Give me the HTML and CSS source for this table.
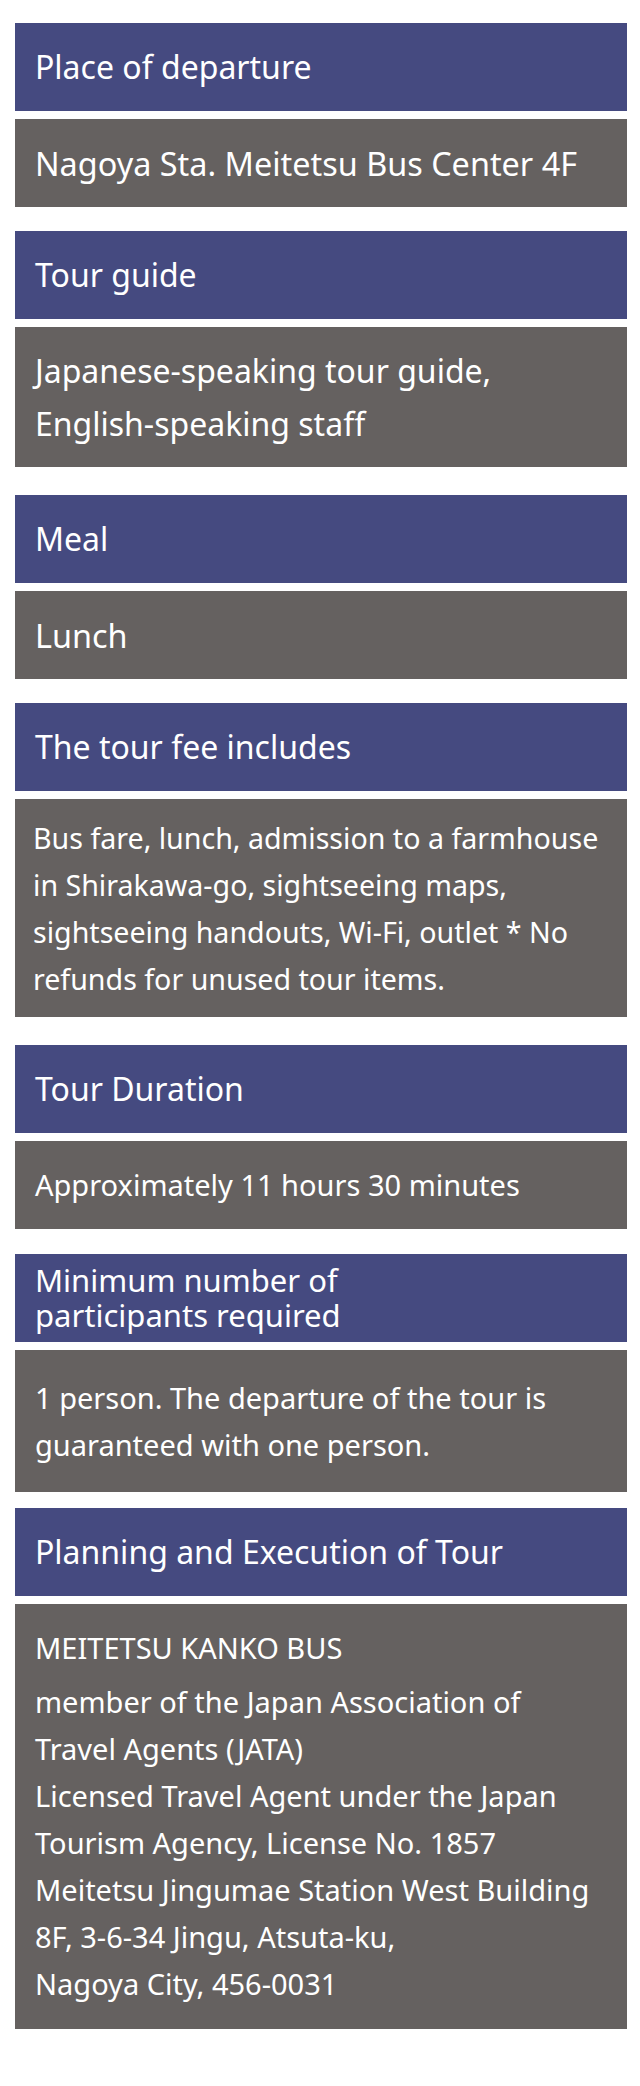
FILE: index.html
```html
<!DOCTYPE html>
<html lang="en">
<head>
<meta charset="utf-8">
<title>Tour details</title>
<link rel="stylesheet" href="styles.css">
</head>
<body>
<main class="info">
  <section class="item">
    <h2 class="label">Place of departure</h2>
    <div class="value">Nagoya Sta. Meitetsu Bus Center 4F</div>
  </section>
  <section class="item">
    <h2 class="label">Tour guide</h2>
    <div class="value value-two">Japanese-speaking tour guide,<br>English-speaking staff</div>
  </section>
  <section class="item item-wide">
    <h2 class="label">Meal</h2>
    <div class="value">Lunch</div>
  </section>
  <section class="item">
    <h2 class="label">The tour fee includes</h2>
    <div class="value value-small value-fee">Bus fare, lunch, admission to a farmhouse in Shirakawa-go, sightseeing maps, sightseeing handouts, Wi-Fi, outlet * No refunds for unused tour items.</div>
  </section>
  <section class="item item-wide">
    <h2 class="label">Tour Duration</h2>
    <div class="value value-mid">Approximately 11 hours 30 minutes</div>
  </section>
  <section class="item item-mid">
    <h2 class="label label-tight">Minimum number of<br>participants required</h2>
    <div class="value value-small value-min">1 person. The departure of the tour is guaranteed with one person.</div>
  </section>
  <section class="item item-narrow">
    <h2 class="label">Planning and Execution of Tour</h2>
    <div class="value value-small value-company">
      <p class="company">MEITETSU KANKO BUS</p>
      <p class="details">member of the Japan Association of<br>Travel Agents (JATA)<br>Licensed Travel Agent under the Japan<br>Tourism Agency, License No. 1857<br>Meitetsu Jingumae Station West Building<br>8F, 3-6-34 Jingu, Atsuta-ku,<br>Nagoya City, 456-0031</p>
    </div>
  </section>
</main>
</body>
</html>
```

FILE: styles.css
```css
html, body {
  margin: 0;
  padding: 0;
  background: #ffffff;
}

body {
  font-family: "Noto Sans", "Liberation Sans", sans-serif;
  color: #ffffff;
}

.info {
  display: flex;
  flex-direction: column;
  padding: 23px 13px 58px 15px;
}

.item {
  display: flex;
  flex-direction: column;
  gap: 8px;
  margin-top: 24px;
}

.item:first-child {
  margin-top: 0;
}

.item-wide {
  margin-top: 28px;
}

.item-mid {
  margin-top: 25px;
}

.item-narrow {
  margin-top: 16px;
}

.label {
  margin: 0;
  min-height: 88px;
  box-sizing: border-box;
  display: flex;
  align-items: center;
  padding: 0 20px;
  background: #454a80;
  font-size: 32px;
  font-weight: 400;
  line-height: 40px;
}

.label-tight {
  font-size: 31px;
  line-height: 35px;
}

.value {
  min-height: 88px;
  box-sizing: border-box;
  display: flex;
  flex-direction: column;
  justify-content: center;
  padding: 0 20px;
  background: #656160;
  font-size: 32.4px;
  font-weight: 400;
  line-height: 54px;
}

.value-two {
  padding: 17px 20px;
  font-size: 32px;
  line-height: 53px;
}

.value-small {
  font-size: 29px;
  line-height: 47px;
}

.value-mid {
  font-size: 29px;
}

.value-fee {
  padding: 15px 18px;
  font-size: 28.6px;
}

.value-min {
  padding: 24px 20px;
}

.value-company {
  padding: 20px 20px 22px;
}

.company,
.details {
  margin: 0;
}

.company {
  margin-bottom: 7px;
}
```
